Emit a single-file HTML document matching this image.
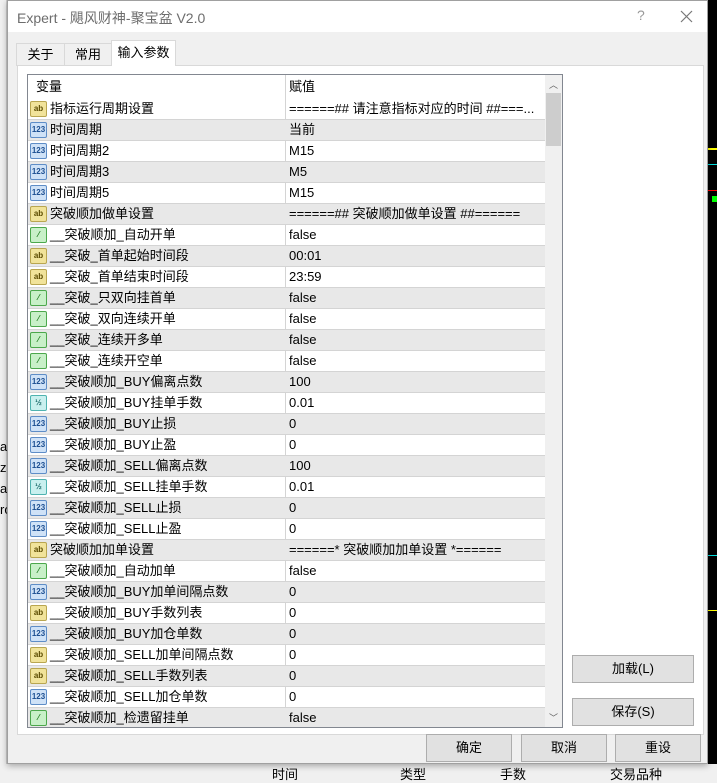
<!DOCTYPE html>
<html><head><meta charset="utf-8"><style>
*{box-sizing:border-box;margin:0;padding:0}
body{width:717px;height:778px;overflow:hidden;position:relative;background:#f0f0f0;font-family:"Liberation Sans","Noto Sans CJK SC",sans-serif;font-size:12px;color:#000}
.abs{position:absolute}
#chart{left:708px;top:0;width:9px;height:778px;background:#000}
#dlg{left:7px;top:0;width:701px;height:764px;background:#f0f0f0;border:1px solid #a0a0a0;box-shadow:0 2px 6px rgba(0,0,0,.3)}
#title{left:0;top:0;width:699px;height:31px;background:#fff}
.tab{top:42px;height:23px;border:1px solid #d9d9d9;border-bottom:none;background:#f0f0f0;text-align:center;line-height:21px;font-size:13px}
#panel{left:9px;top:64px;width:687px;height:670px;background:#fff;border:1px solid #d9d9d9}
#tbl{left:27px;top:74px;width:536px;height:654px;border:1px solid #828790;background:#fff;overflow:hidden}
.row{position:absolute;left:0;width:517px;height:21px;border-bottom:1px solid #d4d4d4;line-height:20px;font-size:13px}
.row.g{background:#e8e8e8}
.c1{position:absolute;left:22px;top:0;white-space:nowrap}
.c2{position:absolute;left:261px;top:0;white-space:nowrap}
.vl{position:absolute;left:257px;top:0;width:1px;height:654px;background:#d4d4d4}
.ic{position:absolute;left:2px;top:2px;width:17px;height:16px;border-radius:2px;font-size:8px;line-height:14px;text-align:center;font-weight:bold}
.ab{background:#f1e39a;border:1px solid #b9a650;color:#5a4a00}
.n{background:#cfe2f7;border:1px solid #5e8dc7;color:#1d4f91}
.h{background:#c9f0ef;border:1px solid #4fb3b0;color:#1a6b6a}
.b{background:#c8f0c8;border:1px solid #4ca84c;color:#1b7a1b}
.btn{background:#e1e1e1;border:1px solid #adadad;text-align:center;font-size:13px}
</style></head><body>
<div class="abs" style="left:0;top:0;width:7px;height:778px;background:#f0f0f0;border-right:1px solid #ccc"></div>
<div class="abs" style="left:0;top:436px;font-size:13px;color:#000;line-height:21px">al<br>zl<br>al<br>ro</div>
<div class="abs" id="chart">
<div class="abs" style="left:0;top:148px;width:9px;height:2px;background:#ff0"></div>
<div class="abs" style="left:0;top:164px;width:9px;height:1px;background:#0dd"></div>
<div class="abs" style="left:0;top:190px;width:9px;height:1px;background:#f00"></div>
<div class="abs" style="left:4px;top:196px;width:5px;height:6px;background:#0f0"></div>
<div class="abs" style="left:0;top:555px;width:9px;height:1px;background:#0dd"></div>
<div class="abs" style="left:0;top:610px;width:9px;height:1px;background:#ff0"></div>
</div>
<div class="abs" style="left:0;top:764px;width:717px;height:14px;background:#f0f0f0;font-size:13px">
<span class="abs" style="left:272px;top:0px">时间</span><span class="abs" style="left:400px;top:0px">类型</span><span class="abs" style="left:500px;top:0px">手数</span><span class="abs" style="left:610px;top:0px">交易品种</span></div>
<div class="abs" id="dlg">
<div class="abs" id="title"><span class="abs" style="left:9px;top:7px;font-size:14px;color:#6d6d6d">Expert - 飓风财神-聚宝盆 V2.0</span>
<span class="abs" style="left:629px;top:6px;font-size:14px;color:#999">?</span>
<svg class="abs" style="left:672px;top:9px" width="13" height="13"><path d="M1 1L12 12M12 1L1 12" stroke="#777" stroke-width="1.2"/></svg></div>
<div class="abs tab" style="left:8px;width:49px">关于</div>
<div class="abs tab" style="left:56px;width:48px">常用</div>
<div class="abs" id="panel"></div>
<div class="abs tab" style="left:103px;top:39px;width:65px;height:26px;background:#fff;line-height:24px">输入参数</div>
<div class="abs btn" style="left:564px;top:654px;width:122px;height:28px;line-height:26px">加载(L)</div>
<div class="abs btn" style="left:564px;top:697px;width:122px;height:28px;line-height:26px">保存(S)</div>
<div class="abs btn" style="left:418px;top:733px;width:86px;height:28px;line-height:26px">确定</div>
<div class="abs btn" style="left:513px;top:733px;width:86px;height:28px;line-height:26px">取消</div>
<div class="abs btn" style="left:607px;top:733px;width:86px;height:28px;line-height:26px">重设</div>
</div>
<div class="abs" id="tbl">
<div class="row" style="top:0;height:24px;line-height:24px;border-bottom:none"><span class="c1" style="left:8px">变量</span><span class="c2">赋值</span></div>
<div class="vl"></div>
<div id="rows"></div>
<div class="abs" style="left:517px;top:0;width:17px;height:652px;background:#f0f0f0">
<div class="abs" style="left:4px;top:3px;font-size:9px;color:#606060">︿</div>
<div class="abs" style="left:1px;top:18px;width:15px;height:53px;background:#cdcdcd"></div>
<div class="abs" style="left:4px;top:636px;font-size:9px;color:#606060">﹀</div>
</div>
</div>
<script>
var d=[["ab","指标运行周期设置","======## 请注意指标对应的时间 ##===..."],["n","时间周期","当前"],["n","时间周期2","M15"],["n","时间周期3","M5"],["n","时间周期5","M15"],["ab","突破顺加做单设置","======## 突破顺加做单设置 ##======"],["b","__突破顺加_自动开单","false"],["ab","__突破_首单起始时间段","00:01"],["ab","__突破_首单结束时间段","23:59"],["b","__突破_只双向挂首单","false"],["b","__突破_双向连续开单","false"],["b","__突破_连续开多单","false"],["b","__突破_连续开空单","false"],["n","__突破顺加_BUY偏离点数","100"],["h","__突破顺加_BUY挂单手数","0.01"],["n","__突破顺加_BUY止损","0"],["n","__突破顺加_BUY止盈","0"],["n","__突破顺加_SELL偏离点数","100"],["h","__突破顺加_SELL挂单手数","0.01"],["n","__突破顺加_SELL止损","0"],["n","__突破顺加_SELL止盈","0"],["ab","突破顺加加单设置","======* 突破顺加加单设置 *======"],["b","__突破顺加_自动加单","false"],["n","__突破顺加_BUY加单间隔点数","0"],["ab","__突破顺加_BUY手数列表","0"],["n","__突破顺加_BUY加仓单数","0"],["ab","__突破顺加_SELL加单间隔点数","0"],["ab","__突破顺加_SELL手数列表","0"],["n","__突破顺加_SELL加仓单数","0"],["b","__突破顺加_检遗留挂单","false"]];
var lab={ab:"ab",n:"123",h:"½",b:"⁄"},h="";
d.forEach(function(r,i){h+='<div class="row'+(i%2?' g':'')+'" style="top:'+(24+i*21)+'px"><div class="ic '+r[0]+'">'+lab[r[0]]+'</div><span class="c1">'+r[1]+'</span><span class="c2">'+r[2]+'</span></div>';});
document.getElementById("rows").innerHTML=h;
</script>
</body></html>
